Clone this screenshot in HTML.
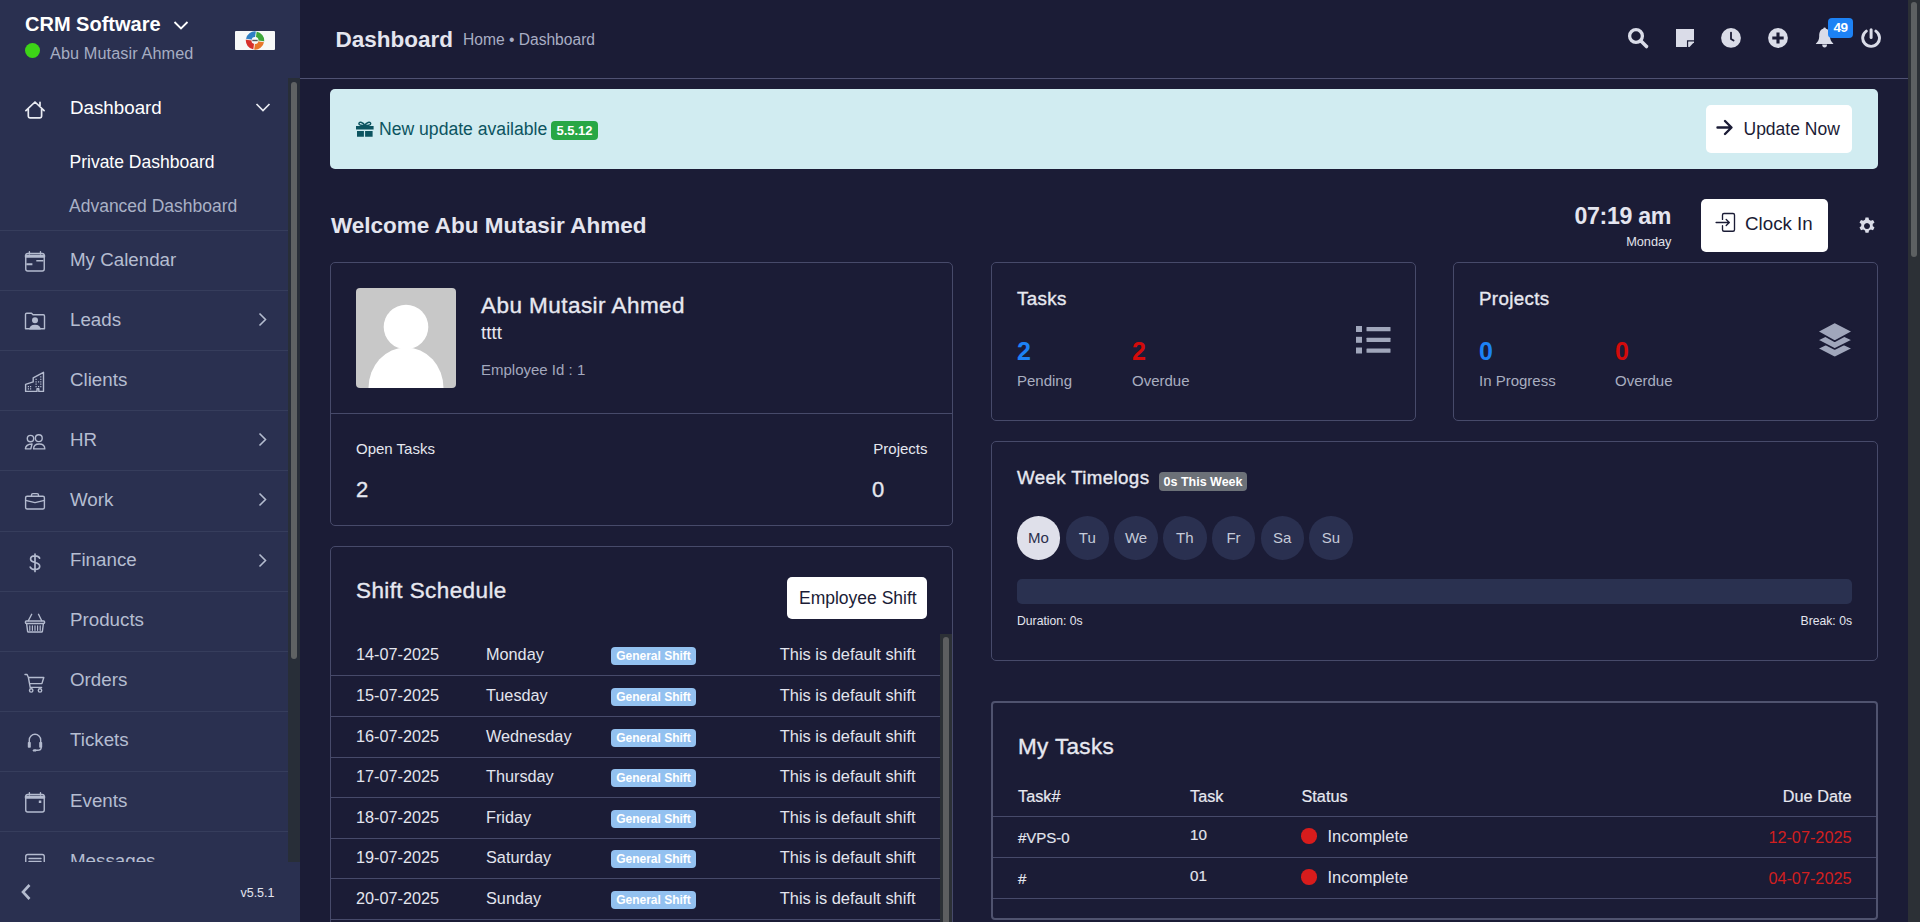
<!DOCTYPE html>
<html><head><meta charset="utf-8"><title>Dashboard</title>
<style>
html,body{margin:0;padding:0;}
body{width:1920px;height:922px;overflow:hidden;position:relative;background:#1b1c36;font-family:"Liberation Sans",sans-serif;}
.t{position:absolute;white-space:nowrap;line-height:1;}
svg{display:block}
</style></head><body>
<div style="position:absolute;left:0px;top:0px;width:300px;height:922px;background:#2a3050"></div><div style="position:absolute;left:1908px;top:0px;width:12px;height:922px;background:#2c3036"></div><div style="position:absolute;left:1911px;top:2px;width:6px;height:255px;background:#5d6062;border-radius:3px"></div><div class="t" style="left:25px;top:13.87px;font-size:20px;font-weight:700;color:#ffffff;">CRM Software</div><svg style="position:absolute;left:173px;top:20px" width="16" height="11" viewBox="0 0 16 11"><path d="M1.5 2 L8 8.5 L14.5 2" fill="none" stroke="#fff" stroke-width="1.8"/></svg><div style="position:absolute;left:25px;top:43px;width:15px;height:15px;background:#3dd417;border-radius:50%"></div><div class="t" style="left:50px;top:45.24px;font-size:16.25px;font-weight:400;color:#a6adc3;letter-spacing:0.1px;">Abu Mutasir Ahmed</div><div style="position:absolute;left:235px;top:31px;width:40px;height:19px;background:#f7f8f8;border-radius:1px;overflow:hidden">
<svg style="position:absolute;left:9.5px;top:0" width="20" height="19" viewBox="0 0 20 19">
<g transform="rotate(8 10 9.5)">
<path d="M10 0.3 A9.2 9.2 0 0 0 0.8 9.5 L6.5 9.5 A3.5 3.5 0 0 1 10 6 Z" fill="#2f7fc4"/>
<path d="M10 0.3 A9.2 9.2 0 0 1 19.2 9.5 L13.5 9.5 A3.5 3.5 0 0 0 10 6 Z" fill="#3ea63a"/>
<path d="M0.8 9.5 A9.2 9.2 0 0 0 10 18.7 L10 13 A3.5 3.5 0 0 1 6.5 9.5 Z" fill="#d7302b"/>
<path d="M19.2 9.5 A9.2 9.2 0 0 1 10 18.7 L10 13 A3.5 3.5 0 0 0 13.5 9.5 Z" fill="#e8772a"/>
<path d="M10 0 V6 M10 13 V19 M0.5 9.5 H6.5 M13.5 9.5 H19.5" stroke="#f7f8f8" stroke-width="0.8"/>
</g><rect x="7.3" y="8.8" width="5.4" height="1.4" fill="#555"/>
</svg></div><svg style="position:absolute;left:20px;top:95px" width="30" height="30" viewBox="0 0 30 30"><path d="M5.9 15.6 L15 7 L24.1 15.6 M8.3 13.3 V21.3 Q8.3 22.9 9.9 22.9 H20 Q21.6 22.9 21.6 21.3 V13.3 M20 7.3 V11" fill="none" stroke="#e9ebf2" stroke-width="1.7" stroke-linejoin="round" stroke-linecap="round"/></svg><div class="t" style="left:70px;top:99.13px;font-size:18.75px;font-weight:400;color:#ffffff;">Dashboard</div><svg style="position:absolute;left:255px;top:102px" width="16" height="11" viewBox="0 0 16 11"><path d="M1.5 2 L8 8.5 L14.5 2" fill="none" stroke="#e9ebf2" stroke-width="1.7"/></svg><div class="t" style="left:69.5px;top:153.79px;font-size:17.5px;font-weight:400;color:#ffffff;">Private Dashboard</div><div class="t" style="left:69px;top:198.39px;font-size:17.5px;font-weight:400;color:#a9b1c6;">Advanced Dashboard</div><div style="position:absolute;left:0;top:0;width:300px;height:862px;overflow:hidden"><div style="position:absolute;left:0;top:230.0px;width:288px;height:1px;background:#363d5c"></div><svg style="position:absolute;left:20px;top:247.0px;color:#b4bbcf" width="30" height="30" viewBox="0 0 30 30" fill="none" stroke="currentColor" stroke-width="1.4" stroke-linejoin="round" stroke-linecap="round"><rect x="5.75" y="6.5" width="18.5" height="17.5" rx="2"/><path d="M5.5 8.5 H24.5 V10 H5.5 Z" fill="currentColor"/><path d="M9.4 4.8 V7 M20.5 4.8 V7"/><path d="M16.3 12.9 H23.4 V14.6 H16.3 Z M6.3 16.3 H12.4 V18.3 H6.3 Z" fill="currentColor" stroke="none"/></svg><div class="t" style="left:70px;top:250.63px;font-size:18.75px;color:#b5bdd1">My Calendar</div><div style="position:absolute;left:0;top:290.1px;width:288px;height:1px;background:#363d5c"></div><svg style="position:absolute;left:20px;top:307.1px;color:#b4bbcf" width="30" height="30" viewBox="0 0 30 30" fill="none" stroke="currentColor" stroke-width="1.4" stroke-linejoin="round" stroke-linecap="round"><path d="M5.5 21.8 V7.5 Q5.5 6.3 6.7 6.3 H11.5 L13 7.8 H23.3 Q24.5 7.8 24.5 9 V21.8 Z"/><circle cx="15" cy="13.2" r="3" fill="currentColor" stroke="none"/><path d="M9.2 22.5 Q9.5 17.8 15 17.8 Q20.5 17.8 20.8 22.5 Z" fill="currentColor" stroke="none"/></svg><div class="t" style="left:70px;top:310.73px;font-size:18.75px;color:#b5bdd1">Leads</div><svg style="position:absolute;left:257px;top:312.1px" width="12" height="15" viewBox="0 0 12 15"><path d="M2.5 1.5 L8.5 7.5 L2.5 13.5" fill="none" stroke="#b4bbcf" stroke-width="1.6"/></svg><div style="position:absolute;left:0;top:350.2px;width:288px;height:1px;background:#363d5c"></div><svg style="position:absolute;left:20px;top:367.2px;color:#b4bbcf" width="30" height="30" viewBox="0 0 30 30" fill="none" stroke="currentColor" stroke-width="1.4" stroke-linejoin="round" stroke-linecap="round"><path d="M5.6 24.4 V17.3 L13.2 14.9 V10.8 L23.5 5.3 V24.4 H18.8 V21.8 H17 V24.4 Z"/><path d="M15.5 11.7 h1.2 v1.2 h-1.2z M20.2 9.2 h1.2 v1.2 h-1.2z M15.5 14.2 h1.2 v1.2 h-1.2z M18 14.2 h1.2 v1.2 h-1.2z M20.2 14.2 h1.2 v1.2 h-1.2z M15.5 19 h1.2 v1.2 h-1.2z M18 19 h1.2 v1.2 h-1.2z M20.2 19 h1.2 v1.2 h-1.2z M15.5 16.6 h1.2 v1.2 h-1.2z M20.2 11.7 h1.2 v1.2 h-1.2z M20.2 16.6 h1.2 v1.2 h-1.2z M7.8 19 h1.2 v1.2 h-1.2z M10 19 h1.2 v1.2 h-1.2z M7.8 21.3 h1.2 v1.2 h-1.2z M10 21.3 h1.2 v1.2 h-1.2z" fill="currentColor" stroke="none"/></svg><div class="t" style="left:70px;top:370.83px;font-size:18.75px;color:#b5bdd1">Clients</div><div style="position:absolute;left:0;top:410.3px;width:288px;height:1px;background:#363d5c"></div><svg style="position:absolute;left:20px;top:427.3px;color:#b4bbcf" width="30" height="30" viewBox="0 0 30 30" fill="none" stroke="currentColor" stroke-width="1.4" stroke-linejoin="round" stroke-linecap="round"><circle cx="10.5" cy="11.6" r="3.2"/><circle cx="18.8" cy="11.2" r="3.4"/><path d="M13.6 21.9 Q13.6 17 19.2 17 Q24.8 17 24.8 21.9 Z"/><path d="M12 17 Q5.6 17.3 5.4 21.9 H10.8 Z"/></svg><div class="t" style="left:70px;top:430.93px;font-size:18.75px;color:#b5bdd1">HR</div><svg style="position:absolute;left:257px;top:432.3px" width="12" height="15" viewBox="0 0 12 15"><path d="M2.5 1.5 L8.5 7.5 L2.5 13.5" fill="none" stroke="#b4bbcf" stroke-width="1.6"/></svg><div style="position:absolute;left:0;top:470.4px;width:288px;height:1px;background:#363d5c"></div><svg style="position:absolute;left:20px;top:487.4px;color:#b4bbcf" width="30" height="30" viewBox="0 0 30 30" fill="none" stroke="currentColor" stroke-width="1.4" stroke-linejoin="round" stroke-linecap="round"><rect x="5.6" y="9.3" width="18.8" height="12.7" rx="1.5"/><path d="M11.5 9.3 V8 Q11.5 6.6 12.9 6.6 H17.1 Q18.5 6.6 18.5 8 V9.3 M5.6 13.4 L15 15.6 L24.4 13.4"/></svg><div class="t" style="left:70px;top:491.03px;font-size:18.75px;color:#b5bdd1">Work</div><svg style="position:absolute;left:257px;top:492.4px" width="12" height="15" viewBox="0 0 12 15"><path d="M2.5 1.5 L8.5 7.5 L2.5 13.5" fill="none" stroke="#b4bbcf" stroke-width="1.6"/></svg><div style="position:absolute;left:0;top:530.5px;width:288px;height:1px;background:#363d5c"></div><svg style="position:absolute;left:20px;top:547.5px;color:#b4bbcf" width="30" height="30" viewBox="0 0 30 30" fill="none" stroke="currentColor" stroke-width="1.4" stroke-linejoin="round" stroke-linecap="round"><path d="M19.6 10.2 Q18.6 7.9 15 7.9 Q10.6 7.9 10.6 11.1 Q10.6 13.6 15 14.5 Q19.7 15.4 19.7 18.3 Q19.7 21.5 15 21.5 Q11 21.5 10.2 19 M15 6 V23.5" stroke-width="1.7"/></svg><div class="t" style="left:70px;top:551.13px;font-size:18.75px;color:#b5bdd1">Finance</div><svg style="position:absolute;left:257px;top:552.5px" width="12" height="15" viewBox="0 0 12 15"><path d="M2.5 1.5 L8.5 7.5 L2.5 13.5" fill="none" stroke="#b4bbcf" stroke-width="1.6"/></svg><div style="position:absolute;left:0;top:590.6px;width:288px;height:1px;background:#363d5c"></div><svg style="position:absolute;left:20px;top:607.6px;color:#b4bbcf" width="30" height="30" viewBox="0 0 30 30" fill="none" stroke="currentColor" stroke-width="1.4" stroke-linejoin="round" stroke-linecap="round"><rect x="5.4" y="13" width="19.2" height="2.5" rx="1"/><path d="M8.3 12.8 L11.7 6.3 M18.5 6.3 L21.7 12.8 M6.6 15.5 L7.6 23.3 Q7.7 24 8.4 24 H21.6 Q22.3 24 22.4 23.3 L23.4 15.5"/><path d="M9.8 17.8 V22.3 M12.4 17.8 V22.3 M15 17.8 V22.3 M17.6 17.8 V22.3 M20.2 17.8 V22.3" stroke-width="1.2"/></svg><div class="t" style="left:70px;top:611.23px;font-size:18.75px;color:#b5bdd1">Products</div><div style="position:absolute;left:0;top:650.7px;width:288px;height:1px;background:#363d5c"></div><svg style="position:absolute;left:20px;top:667.7px;color:#b4bbcf" width="30" height="30" viewBox="0 0 30 30" fill="none" stroke="currentColor" stroke-width="1.4" stroke-linejoin="round" stroke-linecap="round"><path d="M5 6.5 H7.1 L8.4 9.5 H23.8 L21.9 15.6 H9.7 M8.4 9.5 L10.2 19.4 H21.6"/><circle cx="11.2" cy="22.4" r="1.7"/><circle cx="20" cy="22.4" r="1.7"/></svg><div class="t" style="left:70px;top:671.33px;font-size:18.75px;color:#b5bdd1">Orders</div><div style="position:absolute;left:0;top:710.8px;width:288px;height:1px;background:#363d5c"></div><svg style="position:absolute;left:20px;top:727.8px;color:#b4bbcf" width="30" height="30" viewBox="0 0 30 30" fill="none" stroke="currentColor" stroke-width="1.4" stroke-linejoin="round" stroke-linecap="round"><path d="M9.3 15 V12 A5.7 5.7 0 0 1 20.7 12 V15 M21.2 19.5 Q21.2 22.3 17.5 22.3 H15"/><rect x="7.8" y="14" width="3" height="5.8" rx="0.8" fill="currentColor" stroke="none"/><rect x="19.2" y="14" width="3" height="5.8" rx="0.8" fill="currentColor" stroke="none"/><ellipse cx="14.6" cy="22.4" rx="1.9" ry="1.2" fill="currentColor" stroke="none"/></svg><div class="t" style="left:70px;top:731.43px;font-size:18.75px;color:#b5bdd1">Tickets</div><div style="position:absolute;left:0;top:770.9px;width:288px;height:1px;background:#363d5c"></div><svg style="position:absolute;left:20px;top:787.9px;color:#b4bbcf" width="30" height="30" viewBox="0 0 30 30" fill="none" stroke="currentColor" stroke-width="1.4" stroke-linejoin="round" stroke-linecap="round"><rect x="5.75" y="6.5" width="18.5" height="17.5" rx="2"/><path d="M5.5 8.5 H24.5 V10 H5.5 Z" fill="currentColor"/><path d="M9.4 4.8 V7 M20.5 4.8 V7"/><rect x="18.8" y="12.5" width="2.5" height="2.5" fill="currentColor" stroke="none"/></svg><div class="t" style="left:70px;top:791.53px;font-size:18.75px;color:#b5bdd1">Events</div><div style="position:absolute;left:0;top:831.0px;width:288px;height:1px;background:#363d5c"></div><svg style="position:absolute;left:20px;top:848.0px;color:#b4bbcf" width="30" height="30" viewBox="0 0 30 30" fill="none" stroke="currentColor" stroke-width="1.4" stroke-linejoin="round" stroke-linecap="round"><rect x="5.75" y="6.5" width="18.5" height="16" rx="2"/><path d="M9 10.5 H21 M9 13.5 H21"/></svg><div class="t" style="left:70px;top:851.63px;font-size:18.75px;color:#b5bdd1">Messages</div></div><div style="position:absolute;left:288px;top:78px;width:12px;height:784px;background:#282e38"></div><div style="position:absolute;left:291px;top:82px;width:6px;height:577px;background:#5f6263;border-radius:3px"></div><div style="position:absolute;left:0px;top:862px;width:300px;height:60px;background:#2a3050"></div><svg style="position:absolute;left:19px;top:883px" width="14" height="18" viewBox="0 0 14 18"><path d="M10.5 2 L4 9 L10.5 16" fill="none" stroke="#b4bbcf" stroke-width="2.6"/></svg><div class="t" style="right:1645.5px;text-align:right;top:886.72px;font-size:12.5px;font-weight:400;color:#e3e5ee;">v5.5.1</div><div class="t" style="left:335.5px;top:28.55px;font-size:22.5px;font-weight:700;color:#e4e5ef;">Dashboard</div><div class="t" style="left:463px;top:32.39px;font-size:15.6px;font-weight:400;color:#a9aec4;">Home &bull; Dashboard</div><div style="position:absolute;left:300px;top:77.5px;width:1608px;height:1.2px;background:#4f5172"></div><svg style="position:absolute;left:1622px;top:22px" width="30" height="30" viewBox="0 0 30 30"><circle cx="14" cy="14" r="6.4" fill="none" stroke="#dadce8" stroke-width="3.3"/><path d="M19 19 L24.5 24.5" stroke="#dadce8" stroke-width="3.6" stroke-linecap="round"/></svg>
<svg style="position:absolute;left:1676px;top:29px" width="18" height="18" viewBox="0 0 18 18"><path d="M0 0 H18 V13.2 L13.5 18 H0 Z" fill="#dadce8"/><path d="M11.6 18 V11.9 H18" fill="none" stroke="#1b1c36" stroke-width="1.3"/><path d="M12.6 12.9 H17 L12.6 17.5 Z" fill="#dadce8"/></svg>
<svg style="position:absolute;left:1721px;top:28px" width="20" height="20" viewBox="0 0 20 20"><circle cx="10" cy="9.9" r="9.9" fill="#dadce8"/><path d="M10 4.6 V10.9 L12.6 12.6" fill="none" stroke="#1b1c36" stroke-width="1.8" stroke-linecap="round" stroke-linejoin="round"/></svg>
<svg style="position:absolute;left:1768px;top:28px" width="20" height="20" viewBox="0 0 20 20"><circle cx="10" cy="10" r="9.9" fill="#dadce8"/><path d="M10 4.4 V15.6 M4.3 10 H15.7" stroke="#1b1c36" stroke-width="3.1"/></svg>
<svg style="position:absolute;left:1815px;top:27px" width="20" height="22" viewBox="0 0 20 22"><circle cx="9.6" cy="1.9" r="1.3" fill="#dadce8"/><path d="M9.6 1.5 C5.2 1.8 4.2 5.5 4.2 9.5 C4.2 12.5 3 14.5 1 16.5 Q0.6 17 1.2 17 H18 Q18.6 17 18.2 16.5 C16.2 14.5 15 12.5 15 9.5 C15 5.5 14 1.8 9.6 1.5 Z" fill="#dadce8"/><path d="M7.2 17.5 H12 Q12 20.5 9.6 20.5 Q7.2 20.5 7.2 17.5 Z" fill="#dadce8"/></svg>
<div style="position:absolute;left:1828px;top:18px;width:25px;height:20px;background:#1d82f5;border-radius:4px"></div>
<svg style="position:absolute;left:1861px;top:28px" width="21" height="21" viewBox="0 0 21 21"><path d="M5.3 3.1 A8.4 8.4 0 1 0 14.9 3.1" fill="none" stroke="#dadce8" stroke-width="2.9" stroke-linecap="round"/><path d="M10.1 1.7 V9.4" stroke="#dadce8" stroke-width="3" stroke-linecap="round"/></svg><div class="t" style="left:1840.6px;top:20.57px;font-size:13.5px;font-weight:700;color:#ffffff;transform:translateX(-50%);letter-spacing:-0.3px;">49</div><div style="position:absolute;left:330px;top:89px;width:1548px;height:80px;background:#d1ecf1;border-radius:5px"></div><svg style="position:absolute;left:356px;top:121px" width="18" height="16" viewBox="0 0 18 16"><path d="M0 5.1 H17.6 V8.6 H0 Z M1 10.1 H7.9 V15.7 H1 Z M9.1 10.1 H16.6 V15.7 H9.1 Z" fill="#0c5460"/><path d="M8.8 4.6 C7.5 1.2 3.2 0.2 2.9 2.6 C2.7 4.4 6.5 4.6 8.8 4.6 C11.1 4.6 14.9 4.4 14.7 2.6 C14.4 0.2 10.1 1.2 8.8 4.6 Z" fill="none" stroke="#0c5460" stroke-width="1.5"/></svg><div class="t" style="left:379px;top:120.80px;font-size:17.6px;font-weight:400;color:#0c5460;">New update available</div><div style="position:absolute;left:551px;top:121px;width:47px;height:19px;background:#28a745;border-radius:4px"></div><div class="t" style="left:574.5px;top:124.30px;font-size:13px;font-weight:700;color:#ffffff;transform:translateX(-50%);">5.5.12</div><div style="position:absolute;left:1706px;top:105px;width:146px;height:48px;background:#ffffff;border-radius:5px"></div><svg style="position:absolute;left:1716px;top:119px" width="18" height="17" viewBox="0 0 18 17"><path d="M1.5 8.5 H15 M9 2 L15.5 8.5 L9 15" fill="none" stroke="#1b1c36" stroke-width="2.4" stroke-linecap="round" stroke-linejoin="round"/></svg><div class="t" style="left:1743.5px;top:120.99px;font-size:17.5px;font-weight:400;color:#1b1c36;">Update Now</div><div class="t" style="left:331px;top:214.65px;font-size:22.5px;font-weight:700;color:#e4e5ef;">Welcome Abu Mutasir Ahmed</div><div class="t" style="right:249px;text-align:right;top:204.76px;font-size:23.2px;font-weight:700;color:#e4e5ef;letter-spacing:-0.35px;">07:19 am</div><div class="t" style="right:248.5px;text-align:right;top:235.81px;font-size:12.75px;font-weight:400;color:#e0e2ea;">Monday</div><div style="position:absolute;left:1701px;top:199px;width:127px;height:53px;background:#ffffff;border-radius:5px"></div><svg style="position:absolute;left:1710px;top:205px" width="35" height="35" viewBox="0 0 35 35"><path d="M12.5 14.4 V10 Q12.5 8.5 14 8.5 H23 Q24.5 8.5 24.5 10 V24.7 Q24.5 26.2 23 26.2 H14 Q12.5 26.2 12.5 24.7 V20.7 M6.1 17.5 H19.2 M16.2 14.4 L19.3 17.5 L16.2 20.6" fill="none" stroke="#1b1c36" stroke-width="1.35" stroke-linecap="round" stroke-linejoin="round"/></svg><div class="t" style="left:1745px;top:215.43px;font-size:18.75px;font-weight:400;color:#1b1c36;">Clock In</div><svg style="position:absolute;left:1858px;top:216.5px" width="18" height="18" viewBox="0 0 18 18"><path fill="#dadce8" d="M7.5 0.5 h3 l0.5 2.3 a6.5 6.5 0 0 1 1.8 1 l2.2 -0.8 l1.5 2.6 l-1.8 1.5 a6.5 6.5 0 0 1 0 2 l1.8 1.5 l-1.5 2.6 l-2.2 -0.8 a6.5 6.5 0 0 1 -1.8 1 l-0.5 2.3 h-3 l-0.5 -2.3 a6.5 6.5 0 0 1 -1.8 -1 l-2.2 0.8 l-1.5 -2.6 l1.8 -1.5 a6.5 6.5 0 0 1 0 -2 l-1.8 -1.5 l1.5 -2.6 l2.2 0.8 a6.5 6.5 0 0 1 1.8 -1 Z M9 6 a3 3 0 1 0 0.001 0 Z" fill-rule="evenodd"/></svg><div style="position:absolute;left:330px;top:262px;width:623px;height:264px;box-sizing:border-box;border:1px solid #474a6a;border-radius:5px"></div><div style="position:absolute;left:331px;top:413px;width:621px;height:1px;background:#474a6a"></div><div style="position:absolute;left:356px;top:288px;width:100px;height:100px;background:#c8c8c8;border-radius:4px;overflow:hidden">
<svg width="100" height="100" viewBox="0 0 100 100"><circle cx="50" cy="39" r="22.3" fill="#fff"/><ellipse cx="50" cy="100" rx="37.5" ry="40.5" fill="#fff"/></svg></div><div class="t" style="left:481px;top:294.95px;font-size:22.5px;font-weight:400;color:#e7e8f0;letter-spacing:0.45px;-webkit-text-stroke:0.35px currentColor;">Abu Mutasir Ahmed</div><div class="t" style="left:481px;top:324.13px;font-size:18.75px;font-weight:400;color:#e7e8f0;">tttt</div><div class="t" style="left:481px;top:362.10px;font-size:15px;font-weight:400;color:#a3a8bd;">Employee Id : 1</div><div class="t" style="left:356px;top:441.00px;font-size:15px;font-weight:400;color:#e5e7ef;">Open Tasks</div><div class="t" style="left:356px;top:479.38px;font-size:22px;font-weight:400;color:#e5e7ef;-webkit-text-stroke:0.35px currentColor;">2</div><div class="t" style="right:992.5px;text-align:right;top:441.00px;font-size:15px;font-weight:400;color:#e5e7ef;">Projects</div><div class="t" style="left:872px;top:479.38px;font-size:22px;font-weight:400;color:#e5e7ef;-webkit-text-stroke:0.35px currentColor;">0</div><div style="position:absolute;left:991px;top:262px;width:425px;height:159px;box-sizing:border-box;border:1px solid #474a6a;border-radius:5px"></div><div class="t" style="left:1017px;top:290.13px;font-size:18.75px;font-weight:400;color:#e7e8f0;letter-spacing:0.35px;-webkit-text-stroke:0.35px currentColor;">Tasks</div><div style="position:absolute;left:1453px;top:262px;width:425px;height:159px;box-sizing:border-box;border:1px solid #474a6a;border-radius:5px"></div><div class="t" style="left:1479px;top:290.13px;font-size:18.75px;font-weight:400;color:#e7e8f0;letter-spacing:0.35px;-webkit-text-stroke:0.35px currentColor;">Projects</div><div class="t" style="left:1017px;top:338.84px;font-size:25px;font-weight:700;color:#1d82f5;">2</div><div class="t" style="left:1017px;top:372.50px;font-size:15px;font-weight:400;color:#a9aec0;">Pending</div><div class="t" style="left:1132px;top:338.84px;font-size:25px;font-weight:700;color:#d30b0b;">2</div><div class="t" style="left:1132px;top:372.50px;font-size:15px;font-weight:400;color:#a9aec0;">Overdue</div><div class="t" style="left:1479px;top:338.84px;font-size:25px;font-weight:700;color:#1d82f5;">0</div><div class="t" style="left:1479px;top:372.50px;font-size:15px;font-weight:400;color:#a9aec0;">In Progress</div><div class="t" style="left:1615px;top:338.84px;font-size:25px;font-weight:700;color:#d30b0b;">0</div><div class="t" style="left:1615px;top:372.50px;font-size:15px;font-weight:400;color:#a9aec0;">Overdue</div><svg style="position:absolute;left:1356px;top:326px" width="35" height="28" viewBox="0 0 35 28"><g fill="#a0a6bb"><rect x="0" y="0" width="6" height="6"/><rect x="0" y="10.8" width="6" height="6"/><rect x="0" y="21.5" width="6" height="6"/><rect x="10.5" y="1" width="24" height="4.2" rx="0.5"/><rect x="10.5" y="11.8" width="24" height="4.2" rx="0.5"/><rect x="10.5" y="22.5" width="24" height="4.2" rx="0.5"/></g></svg><svg style="position:absolute;left:1810px;top:316px" width="50" height="48" viewBox="0 0 50 48"><g fill="#a0a6bb" stroke="#1b1c36" stroke-width="1.7" stroke-linejoin="round"><path d="M24.7 24 L7.3 32.6 L24.7 41.5 L42.7 32.6 Z"/><path d="M24.7 15.5 L7.3 24.1 L24.7 33 L42.7 24.1 Z"/><path d="M24.7 6.2 L7.3 15.4 L24.7 25.2 L42.7 15.4 Z"/></g></svg><div style="position:absolute;left:991px;top:441px;width:887px;height:220px;box-sizing:border-box;border:1px solid #474a6a;border-radius:5px"></div><div class="t" style="left:1017px;top:469.43px;font-size:18.75px;font-weight:400;color:#e7e8f0;letter-spacing:0.35px;-webkit-text-stroke:0.35px currentColor;">Week Timelogs</div><div style="position:absolute;left:1159px;top:472px;width:88px;height:19px;background:#6c7178;border-radius:4px"></div><div class="t" style="left:1203px;top:475.62px;font-size:12.5px;font-weight:700;color:#ffffff;transform:translateX(-50%);">0s This Week</div><div style="position:absolute;left:1016.75px;top:516px;width:43.5px;height:43.5px;background:#dfe0ea;border-radius:50%"></div><div class="t" style="left:1038.5px;top:530.30px;font-size:15px;font-weight:400;color:#2b2f4a;transform:translateX(-50%);">Mo</div><div style="position:absolute;left:1065.5px;top:516px;width:43.5px;height:43.5px;background:#2a3050;border-radius:50%"></div><div class="t" style="left:1087.25px;top:530.30px;font-size:15px;font-weight:400;color:#c5cad8;transform:translateX(-50%);">Tu</div><div style="position:absolute;left:1114.25px;top:516px;width:43.5px;height:43.5px;background:#2a3050;border-radius:50%"></div><div class="t" style="left:1136.0px;top:530.30px;font-size:15px;font-weight:400;color:#c5cad8;transform:translateX(-50%);">We</div><div style="position:absolute;left:1163.0px;top:516px;width:43.5px;height:43.5px;background:#2a3050;border-radius:50%"></div><div class="t" style="left:1184.75px;top:530.30px;font-size:15px;font-weight:400;color:#c5cad8;transform:translateX(-50%);">Th</div><div style="position:absolute;left:1211.75px;top:516px;width:43.5px;height:43.5px;background:#2a3050;border-radius:50%"></div><div class="t" style="left:1233.5px;top:530.30px;font-size:15px;font-weight:400;color:#c5cad8;transform:translateX(-50%);">Fr</div><div style="position:absolute;left:1260.5px;top:516px;width:43.5px;height:43.5px;background:#2a3050;border-radius:50%"></div><div class="t" style="left:1282.25px;top:530.30px;font-size:15px;font-weight:400;color:#c5cad8;transform:translateX(-50%);">Sa</div><div style="position:absolute;left:1309.25px;top:516px;width:43.5px;height:43.5px;background:#2a3050;border-radius:50%"></div><div class="t" style="left:1331.0px;top:530.30px;font-size:15px;font-weight:400;color:#c5cad8;transform:translateX(-50%);">Su</div><div style="position:absolute;left:1017px;top:579px;width:835px;height:25px;background:#2a3150;border-radius:5px"></div><div class="t" style="left:1017px;top:614.87px;font-size:12.2px;font-weight:400;color:#e3e5ee;">Duration: 0s</div><div class="t" style="right:68px;text-align:right;top:614.87px;font-size:12.2px;font-weight:400;color:#e3e5ee;">Break: 0s</div><div style="position:absolute;left:330px;top:546px;width:623px;height:400px;box-sizing:border-box;border:1px solid #474a6a;border-radius:5px"></div><div class="t" style="left:356px;top:579.95px;font-size:22.5px;font-weight:400;color:#e7e8f0;letter-spacing:0.4px;-webkit-text-stroke:0.35px currentColor;">Shift Schedule</div><div style="position:absolute;left:787px;top:577px;width:140px;height:42px;background:#ffffff;border-radius:5px"></div><div class="t" style="left:799px;top:590.19px;font-size:17.5px;font-weight:400;color:#1b1c36;">Employee Shift</div><div class="t" style="left:356px;top:646.24px;font-size:16.25px;font-weight:400;color:#e3e5ee;">14-07-2025</div><div class="t" style="left:486px;top:646.24px;font-size:16.25px;font-weight:400;color:#e3e5ee;">Monday</div><div style="position:absolute;left:611px;top:647px;width:85px;height:18px;background:#93c1f0;border-radius:4px"></div><div class="t" style="left:653.5px;top:649.84px;font-size:12px;font-weight:700;color:#ffffff;transform:translateX(-50%);">General Shift</div><div class="t" style="right:1004.5px;text-align:right;top:646.12px;font-size:16.4px;font-weight:400;color:#e3e5ee;">This is default shift</div><div style="position:absolute;left:331px;top:675px;width:609px;height:1px;background:#474a6a"></div><div class="t" style="left:356px;top:687.24px;font-size:16.25px;font-weight:400;color:#e3e5ee;">15-07-2025</div><div class="t" style="left:486px;top:687.24px;font-size:16.25px;font-weight:400;color:#e3e5ee;">Tuesday</div><div style="position:absolute;left:611px;top:688px;width:85px;height:18px;background:#93c1f0;border-radius:4px"></div><div class="t" style="left:653.5px;top:690.84px;font-size:12px;font-weight:700;color:#ffffff;transform:translateX(-50%);">General Shift</div><div class="t" style="right:1004.5px;text-align:right;top:687.12px;font-size:16.4px;font-weight:400;color:#e3e5ee;">This is default shift</div><div style="position:absolute;left:331px;top:716px;width:609px;height:1px;background:#474a6a"></div><div class="t" style="left:356px;top:728.24px;font-size:16.25px;font-weight:400;color:#e3e5ee;">16-07-2025</div><div class="t" style="left:486px;top:728.24px;font-size:16.25px;font-weight:400;color:#e3e5ee;">Wednesday</div><div style="position:absolute;left:611px;top:729px;width:85px;height:18px;background:#93c1f0;border-radius:4px"></div><div class="t" style="left:653.5px;top:731.84px;font-size:12px;font-weight:700;color:#ffffff;transform:translateX(-50%);">General Shift</div><div class="t" style="right:1004.5px;text-align:right;top:728.12px;font-size:16.4px;font-weight:400;color:#e3e5ee;">This is default shift</div><div style="position:absolute;left:331px;top:757px;width:609px;height:1px;background:#474a6a"></div><div class="t" style="left:356px;top:768.24px;font-size:16.25px;font-weight:400;color:#e3e5ee;">17-07-2025</div><div class="t" style="left:486px;top:768.24px;font-size:16.25px;font-weight:400;color:#e3e5ee;">Thursday</div><div style="position:absolute;left:611px;top:769px;width:85px;height:18px;background:#93c1f0;border-radius:4px"></div><div class="t" style="left:653.5px;top:771.84px;font-size:12px;font-weight:700;color:#ffffff;transform:translateX(-50%);">General Shift</div><div class="t" style="right:1004.5px;text-align:right;top:768.12px;font-size:16.4px;font-weight:400;color:#e3e5ee;">This is default shift</div><div style="position:absolute;left:331px;top:797px;width:609px;height:1px;background:#474a6a"></div><div class="t" style="left:356px;top:809.24px;font-size:16.25px;font-weight:400;color:#e3e5ee;">18-07-2025</div><div class="t" style="left:486px;top:809.24px;font-size:16.25px;font-weight:400;color:#e3e5ee;">Friday</div><div style="position:absolute;left:611px;top:810px;width:85px;height:18px;background:#93c1f0;border-radius:4px"></div><div class="t" style="left:653.5px;top:812.84px;font-size:12px;font-weight:700;color:#ffffff;transform:translateX(-50%);">General Shift</div><div class="t" style="right:1004.5px;text-align:right;top:809.12px;font-size:16.4px;font-weight:400;color:#e3e5ee;">This is default shift</div><div style="position:absolute;left:331px;top:838px;width:609px;height:1px;background:#474a6a"></div><div class="t" style="left:356px;top:849.24px;font-size:16.25px;font-weight:400;color:#e3e5ee;">19-07-2025</div><div class="t" style="left:486px;top:849.24px;font-size:16.25px;font-weight:400;color:#e3e5ee;">Saturday</div><div style="position:absolute;left:611px;top:850px;width:85px;height:18px;background:#93c1f0;border-radius:4px"></div><div class="t" style="left:653.5px;top:852.84px;font-size:12px;font-weight:700;color:#ffffff;transform:translateX(-50%);">General Shift</div><div class="t" style="right:1004.5px;text-align:right;top:849.12px;font-size:16.4px;font-weight:400;color:#e3e5ee;">This is default shift</div><div style="position:absolute;left:331px;top:878px;width:609px;height:1px;background:#474a6a"></div><div class="t" style="left:356px;top:890.24px;font-size:16.25px;font-weight:400;color:#e3e5ee;">20-07-2025</div><div class="t" style="left:486px;top:890.24px;font-size:16.25px;font-weight:400;color:#e3e5ee;">Sunday</div><div style="position:absolute;left:611px;top:891px;width:85px;height:18px;background:#93c1f0;border-radius:4px"></div><div class="t" style="left:653.5px;top:893.84px;font-size:12px;font-weight:700;color:#ffffff;transform:translateX(-50%);">General Shift</div><div class="t" style="right:1004.5px;text-align:right;top:890.12px;font-size:16.4px;font-weight:400;color:#e3e5ee;">This is default shift</div><div style="position:absolute;left:331px;top:919px;width:609px;height:1px;background:#474a6a"></div><div style="position:absolute;left:940px;top:634px;width:12px;height:288px;background:#2c3036"></div><div style="position:absolute;left:943px;top:637px;width:6px;height:300px;background:#5d5e60;border-radius:3px"></div><div style="position:absolute;left:991px;top:701px;width:887px;height:219px;box-sizing:border-box;border:2px solid #50536f;border-radius:4px"></div><div class="t" style="left:1018px;top:735.75px;font-size:22.5px;font-weight:400;color:#e7e8f0;letter-spacing:0.35px;-webkit-text-stroke:0.35px currentColor;">My Tasks</div><div class="t" style="left:1018px;top:787.54px;font-size:16.25px;font-weight:400;color:#e7e8f0;-webkit-text-stroke:0.2px currentColor;">Task#</div><div class="t" style="left:1190px;top:787.54px;font-size:16.25px;font-weight:400;color:#e7e8f0;-webkit-text-stroke:0.2px currentColor;">Task</div><div class="t" style="left:1301.5px;top:787.54px;font-size:16.25px;font-weight:400;color:#e7e8f0;-webkit-text-stroke:0.2px currentColor;">Status</div><div class="t" style="right:68.5px;text-align:right;top:787.54px;font-size:16.25px;font-weight:400;color:#e7e8f0;-webkit-text-stroke:0.2px currentColor;">Due Date</div><div style="position:absolute;left:993px;top:815.5px;width:883px;height:1.3px;background:#474a6a"></div><div class="t" style="left:1018px;top:829.50px;font-size:15px;font-weight:400;color:#e3e5ee;-webkit-text-stroke:0.15px currentColor;">#VPS-0</div><div class="t" style="left:1190px;top:827.33px;font-size:15.2px;font-weight:400;color:#e3e5ee;-webkit-text-stroke:0.15px currentColor;">10</div><div style="position:absolute;left:1301px;top:828px;width:15.5px;height:15.5px;background:#d81c1c;border-radius:50%"></div><div class="t" style="left:1327.5px;top:827.83px;font-size:16.5px;font-weight:400;color:#e3e5ee;">Incomplete</div><div class="t" style="right:68.5px;text-align:right;top:829.04px;font-size:16.25px;font-weight:400;color:#d21f1f;">12-07-2025</div><div style="position:absolute;left:993px;top:856.5px;width:883px;height:1.3px;background:#474a6a"></div><div class="t" style="left:1018px;top:870.50px;font-size:15px;font-weight:400;color:#e3e5ee;-webkit-text-stroke:0.15px currentColor;">#</div><div class="t" style="left:1190px;top:868.33px;font-size:15.2px;font-weight:400;color:#e3e5ee;-webkit-text-stroke:0.15px currentColor;">01</div><div style="position:absolute;left:1301px;top:869px;width:15.5px;height:15.5px;background:#d81c1c;border-radius:50%"></div><div class="t" style="left:1327.5px;top:868.83px;font-size:16.5px;font-weight:400;color:#e3e5ee;">Incomplete</div><div class="t" style="right:68.5px;text-align:right;top:870.04px;font-size:16.25px;font-weight:400;color:#d21f1f;">04-07-2025</div><div style="position:absolute;left:993px;top:897.5px;width:883px;height:1.3px;background:#474a6a"></div>
</body></html>
